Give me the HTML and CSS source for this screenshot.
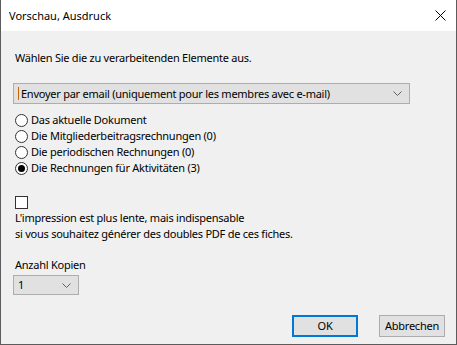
FILE: index.html
```html
<!DOCTYPE html>
<html lang="de">
<head>
    <meta charset="UTF-8">
    <title>Vorschau, Ausdruck</title>
    <link rel="stylesheet" href="styles.css">
</head>
<body>
    <div class="window">
        <div class="titlebar">
            <span class="title">Vorschau, Ausdruck</span>
            <svg class="close" width="11" height="11" viewBox="0 0 11 11">
                <path d="M0.5 0.5 L10.5 10.5 M10.5 0.5 L0.5 10.5" stroke="#000" stroke-width="1" fill="none"/>
            </svg>
        </div>
        <div class="content">
            <div class="prompt">Wählen Sie die zu verarbeitenden Elemente aus.</div>

            <div class="combo wide">
                <span class="caret"></span>
                <span class="combo-text">Envoyer par email (uniquement pour les membres avec e-mail)</span>
                <svg class="chevron" width="9" height="5" viewBox="0 0 9 5">
                    <path d="M0.5 0.5 L4.5 4.5 L8.5 0.5" stroke="#606060" fill="none"/>
                </svg>
            </div>

            <div class="radios">
                <div class="radio-row"><span class="radio"></span>Das aktuelle Dokument</div>
                <div class="radio-row"><span class="radio"></span>Die Mitgliederbeitragsrechnungen (0)</div>
                <div class="radio-row"><span class="radio"></span>Die periodischen Rechnungen (0)</div>
                <div class="radio-row"><span class="radio checked"></span>Die Rechnungen für Aktivitäten (3)</div>
            </div>

            <div class="checkbox"></div>
            <div class="note">
                <div>L'impression est plus lente, mais indispensable</div>
                <div>si vous souhaitez générer des doubles PDF de ces fiches.</div>
            </div>

            <div class="label">Anzahl Kopien</div>
            <div class="combo small">
                <span class="combo-text">1</span>
                <svg class="chevron" width="9" height="5" viewBox="0 0 9 5">
                    <path d="M0.5 0.5 L4.5 4.5 L8.5 0.5" stroke="#606060" fill="none"/>
                </svg>
            </div>

            <div class="buttons">
                <button class="btn default">OK</button>
                <button class="btn">Abbrechen</button>
            </div>
        </div>
    </div>
</body>
</html>
```

FILE: styles.css
```css
body {
    margin: 0;
    font-family: "Noto Sans", "Liberation Sans", sans-serif;
    font-size: 11px;
    letter-spacing: -0.25px;
    color: #000;
    background: #fff;
}

.window {
    width: 457px;
    height: 345px;
    box-sizing: border-box;
    border: 1px solid #5c5c5c;
    border-top: none;
    background: #f0f0f0;
    display: flex;
    flex-direction: column;
}

.titlebar {
    height: 31px;
    background: #fff;
    display: flex;
    align-items: center;
    justify-content: space-between;
    padding: 0 10px 0 8px;
}

.title {
    font-size: 11px;
    letter-spacing: 0;
    line-height: 16px;
}

.content {
    padding: 0 11px 0 12px;
    line-height: 16px;
    display: flex;
    flex-direction: column;
}

.prompt {
    margin: 19px 0 0 2px;
}

.combo {
    box-sizing: border-box;
    background: #e1e1e1;
    border: 1px solid #adadad;
    display: flex;
    align-items: center;
    padding: 0 7px 0 4px;
}

.combo.wide {
    width: 397px;
    height: 21px;
    margin-top: 17px;
}

.combo.small {
    width: 66px;
    height: 20px;
    margin-top: 2px;
}

.caret {
    width: 1px;
    height: 13px;
    background: #c86400;
    margin-right: 2px;
}

.combo-text {
    flex: 1;
    white-space: nowrap;
}

.radios {
    margin-top: 8px;
    margin-left: 2px;
}

.radio-row {
    height: 16px;
    display: flex;
    align-items: center;
}

.radio {
    width: 13px;
    height: 13px;
    box-sizing: border-box;
    border: 1px solid #333;
    border-radius: 50%;
    background: #fff;
    margin-right: 3px;
    display: flex;
    align-items: center;
    justify-content: center;
}

.radio.checked::after {
    content: "";
    width: 7px;
    height: 7px;
    border-radius: 50%;
    background: #000;
}

.checkbox {
    width: 13px;
    height: 13px;
    box-sizing: border-box;
    border: 1px solid #333;
    background: #fff;
    margin: 20px 0 0 2px;
}

.note {
    margin: 1px 0 0 2px;
}

.label {
    margin: 15px 0 0 2px;
}

.buttons {
    display: flex;
    justify-content: flex-end;
    gap: 21px;
    margin-top: 20px;
}

.btn {
    font: inherit;
    letter-spacing: inherit;
    width: 66px;
    height: 22px;
    box-sizing: border-box;
    background: #e1e1e1;
    border: 1px solid #adadad;
    padding: 0;
    color: #000;
}

.btn.default {
    border: 2px solid #0078d7;
}
```
